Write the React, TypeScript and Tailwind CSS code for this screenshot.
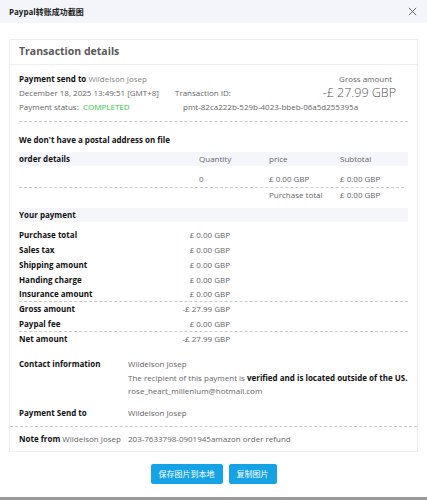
import React from 'react';

const font = { fontFamily: '"Open Sans", "Noto Sans CJK SC", sans-serif' };

const paymentRows: { label: string; value: string; dashed?: boolean }[] = [
  { label: 'Purchase total', value: '£ 0.00 GBP' },
  { label: 'Sales tax', value: '£ 0.00 GBP' },
  { label: 'Shipping amount', value: '£ 0.00 GBP' },
  { label: 'Handing charge', value: '£ 0.00 GBP' },
  { label: 'Insurance amount', value: '£ 0.00 GBP', dashed: true },
  { label: 'Gross amount', value: '-£ 27.99 GBP' },
  { label: 'Paypal fee', value: '£ 0.00 GBP', dashed: true },
  { label: 'Net amount', value: '-£ 27.99 GBP' },
];

const App: React.FC = () => {
  return (
    <div
      className="w-[427px] h-[500px] bg-white flex flex-col border-b-[3px] border-[#9a9a9a] text-[8px] text-[#666]"
      style={font}
    >
      {/* dialog title */}
      <div className="h-[23px] shrink-0 bg-[#f3f5fa] pl-[9px] pr-[10px] flex items-center justify-between">
        <span className="text-[8px] font-bold text-[#222]">Paypal转账成功截图</span>
        <svg width="9" height="9" viewBox="0 0 10 10" className="text-[#555]">
          <path d="M1 1L9 9M9 1L1 9" stroke="currentColor" strokeWidth="1" fill="none" />
        </svg>
      </div>

      <div className="px-[9px] pt-[16px]">
        <div className="border border-[#eeeeee]">
          <div className="h-[25px] px-[9px] flex items-center border-b border-[#eeeeee]">
            <span className="text-[10.5px] font-bold text-[#5a5a5a]">Transaction details</span>
          </div>

          <div className="px-[9px] pt-[6px]">
            {/* summary */}
            <div className="flex items-end h-[14px]">
              <div className="w-[156px] whitespace-nowrap">
                <span className="font-bold text-[#111]">Payment send to</span>{' '}
                <span className="text-[#888]">Wildelson Josep</span>
              </div>
              <div className="flex-1" />
              <div className="pr-[16px] text-[#666]">Gross amount</div>
            </div>
            <div className="flex items-center h-[15px]">
              <div className="w-[156px] whitespace-nowrap">December 18, 2025 13:49:51 [GMT+8]</div>
              <div className="flex-1">Transaction ID:</div>
              <div className="pr-[12px] text-[12.5px] leading-[14px] font-light text-[#555]">-£ 27.99 GBP</div>
            </div>
            <div className="flex items-center h-[14px]">
              <div className="w-[64px]">Payment status:</div>
              <div className="w-[100px] text-[#2ecc40]">COMPLETED</div>
              <div>pmt-82ca222b-529b-4023-bbeb-06a5d255395a</div>
            </div>
            <div className="mt-[7px] border-t border-dashed border-[#cccccc]" />

            <div className="mt-[12px] font-bold text-[#111]">We don't have a postal address on file</div>

            {/* order details */}
            <div className="mt-[6px] h-[14px] bg-[#f5f6fc] grid grid-cols-[180px_70px_71px_1fr] items-center">
              <span className="font-bold text-[#111]">order details</span>
              <span>Quantity</span>
              <span>price</span>
              <span>Subtotal</span>
            </div>
            <div className="h-[22px] grid grid-cols-[180px_70px_71px_1fr] items-end pb-[2px] border-b border-dashed border-[#cccccc] mr-[4px]">
              <span />
              <span>0</span>
              <span>£ 0.00 GBP</span>
              <span>£ 0.00 GBP</span>
            </div>
            <div className="h-[14px] grid grid-cols-[250px_71px_1fr] items-center">
              <span />
              <span>Purchase total</span>
              <span>£ 0.00 GBP</span>
            </div>

            <div className="mt-[6px] h-[14px] bg-[#f5f6fc] flex items-center">
              <span className="font-bold text-[#111]">Your payment</span>
            </div>

            <div className="pt-[6px]">
              {paymentRows.map((row) => (
                <div
                  key={row.label}
                  className={`flex items-center h-[14.8px] ${row.dashed ? 'border-b border-dashed border-[#cccccc]' : ''}`}
                >
                  <span className="font-bold text-[#111] w-[150px]">{row.label}</span>
                  <span className="w-[61px] text-right">{row.value}</span>
                </div>
              ))}
            </div>

            {/* contact */}
            <div className="mt-[11px] flex">
              <span className="w-[109px] font-bold text-[#111] leading-[13.5px]">Contact information</span>
              <div className="flex flex-col leading-[13.5px]">
                <span>Wildelson Josep</span>
                <span>
                  The recipient of this payment is{' '}
                  <span className="font-bold text-[#111]">verified and is located outside of the US.</span>
                </span>
                <span>rose_heart_millenium@hotmail.com</span>
              </div>
            </div>
            <div className="mt-[8px] flex h-[14px] items-center">
              <span className="w-[109px] font-bold text-[#111]">Payment Send to</span>
              <span>Wildelson Josep</span>
            </div>
          </div>

          <div className="mt-[6px] border-t border-dashed border-[#cccccc] px-[9px] h-[25px] flex items-center">
            <span className="w-[109px] whitespace-nowrap">
              <span className="font-bold text-[#111]">Note from</span> Wildelson Josep
            </span>
            <span>203-7633798-0901945amazon order refund</span>
          </div>
        </div>
      </div>

      {/* actions */}
      <div className="mt-[12px] flex justify-center gap-[6px]">
        <button className="h-[20px] px-[8px] bg-[#15a3e6] text-white text-[8px] rounded-[2px]">保存图片到本地</button>
        <button className="h-[20px] px-[8px] bg-[#15a3e6] text-white text-[8px] rounded-[2px]">复制图片</button>
      </div>
    </div>
  );
};

export default App;
